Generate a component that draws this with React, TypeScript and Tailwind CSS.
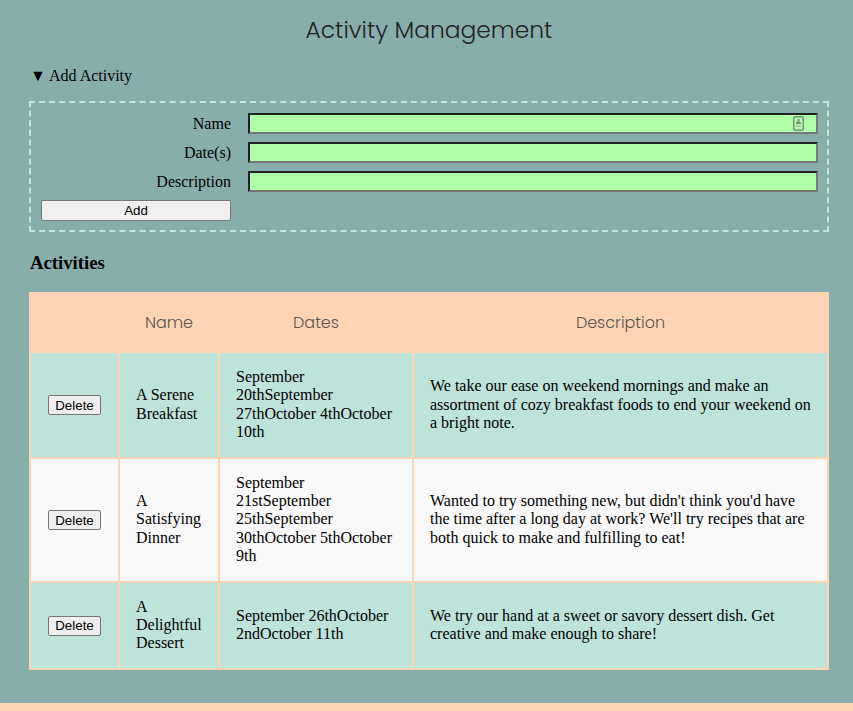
import React from "react";

const rows = [
  {
    name: "A Serene Breakfast",
    dates: "September 20thSeptember 27thOctober 4thOctober 10th",
    desc: "We take our ease on weekend mornings and make an assortment of cozy breakfast foods to end your weekend on a bright note.",
    bg: "bg-[#bee3db]",
  },
  {
    name: "A Satisfying Dinner",
    dates: "September 21stSeptember 25thSeptember 30thOctober 5thOctober 9th",
    desc: "Wanted to try something new, but didn't think you'd have the time after a long day at work? We'll try recipes that are both quick to make and fulfilling to eat!",
    bg: "bg-[#f9f9f9]",
  },
  {
    name: "A Delightful Dessert",
    dates: "September 26thOctober 2ndOctober 11th",
    desc: "We try our hand at a sweet or savory dessert dish. Get creative and make enough to share!",
    bg: "bg-[#bee3db]",
  },
];

const inputCls =
  "block h-[21px] w-full bg-[#b0ffa8] border-2 border-t-[#222] border-l-[#222] border-r-[#777] border-b-[#777] outline-none";

function Btn({ label, className = "" }: { label: string; className?: string }) {
  return (
    <button
      className={
        "bg-[#efefef] border border-[#767676] rounded-[2px] text-[13.33px] leading-none text-black font-['Liberation_Sans',Arial,sans-serif] " +
        className
      }
    >
      {label}
    </button>
  );
}

const thCls =
  "h-[57px] font-light text-[16px] text-[#555] font-['Poppins','Inter',sans-serif]";
const tdCls = "px-[16px] py-[15px] align-middle text-[16px] leading-[18.4px]";

export default function App() {
  return (
    <div className="min-h-[711px] bg-[#88aeac] font-['Liberation_Serif','Times_New_Roman',serif] text-black">
      <div className="ml-[29px] w-[800px]">
        <h1 className="pt-[14px] text-center text-[23.4px] leading-[32px] font-light text-[#222] font-['Poppins','Inter',sans-serif]">
          Activity Management
        </h1>
        <div className="mt-[21px] pl-[1px] text-[16px] leading-[18px]">▼ Add Activity</div>
        <div className="mt-[16px] border-2 border-dashed border-[#c2e6dd] pt-[10px] pb-[9px] pl-[10px] pr-[10px]">
          <div className="grid grid-cols-[190px_570px] gap-x-[17px] gap-y-[8px] items-center text-[16px]">
            <label className="text-right leading-[18px]">Name</label>
            <div className="relative h-[21px]">
              <input className={inputCls} />
              <svg
                className="absolute right-[14px] top-[3px]"
                width="11"
                height="15"
                viewBox="0 0 11 15"
              >
                <rect x="0.75" y="0.75" width="9.5" height="13.5" rx="1.5" fill="none" stroke="#7a8f78" strokeWidth="1.5" />
                <rect x="4.5" y="3" width="2" height="4" fill="#7a8f78" />
                <rect x="3" y="6" width="5" height="2" fill="#7a8f78" />
                <rect x="3" y="9.5" width="5" height="1.2" fill="#9ab596" />
              </svg>
            </div>
            <label className="text-right leading-[18px]">Date(s)</label>
            <input className={inputCls} />
            <label className="text-right leading-[18px]">Description</label>
            <input className={inputCls} />
            <Btn label="Add" className="block w-[190px] h-[21px]" />
          </div>
        </div>
        <h3 className="mt-[20px] text-[18.72px] leading-[22px] font-bold pl-[1px]">Activities</h3>
        <table className="mt-[18px] w-[800px] table-fixed border-separate border-spacing-[2px] bg-[#ffd4b4]">
          <colgroup>
            <col className="w-[87px]" />
            <col className="w-[98px]" />
            <col className="w-[192px]" />
            <col className="w-[413px]" />
          </colgroup>
          <thead>
            <tr>
              <th className="h-[57px]"></th>
              <th className={thCls}>Name</th>
              <th className={thCls}>Dates</th>
              <th className={thCls}>Description</th>
            </tr>
          </thead>
          <tbody>
            {rows.map((r) => (
              <tr key={r.name}>
                <td className={`${r.bg} text-center align-middle`}>
                  <Btn label="Delete" className="px-[6px] h-[20px]" />
                </td>
                <td className={`${r.bg} ${tdCls}`}>{r.name}</td>
                <td className={`${r.bg} ${tdCls}`}>{r.dates}</td>
                <td className={`${r.bg} ${tdCls}`}>{r.desc}</td>
              </tr>
            ))}
          </tbody>
        </table>
      </div>
      <div className="mt-[33px] h-[40px] bg-[#ffd4b4]"></div>
    </div>
  );
}
